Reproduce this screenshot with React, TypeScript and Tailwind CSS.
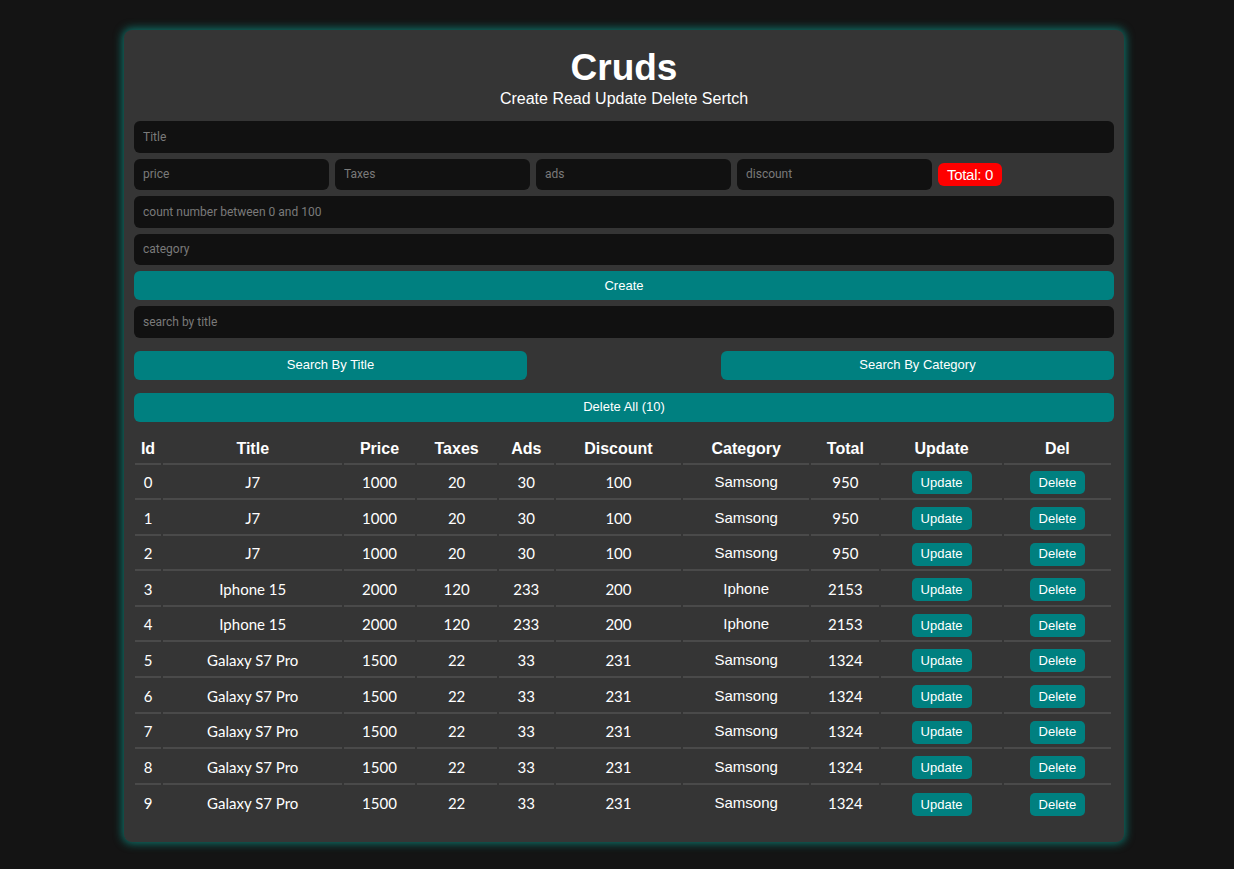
import React from "react";

interface Product {
    id: number;
    title: string;
    price: number;
    taxes: number;
    ads: number;
    discount: number;
    category: string;
    total: number;
}

const products: Product[] = [
    { id: 0, title: "J7", price: 1000, taxes: 20, ads: 30, discount: 100, category: "Samsong", total: 950 },
    { id: 1, title: "J7", price: 1000, taxes: 20, ads: 30, discount: 100, category: "Samsong", total: 950 },
    { id: 2, title: "J7", price: 1000, taxes: 20, ads: 30, discount: 100, category: "Samsong", total: 950 },
    { id: 3, title: "Iphone 15", price: 2000, taxes: 120, ads: 233, discount: 200, category: "Iphone", total: 2153 },
    { id: 4, title: "Iphone 15", price: 2000, taxes: 120, ads: 233, discount: 200, category: "Iphone", total: 2153 },
    { id: 5, title: "Galaxy S7 Pro", price: 1500, taxes: 22, ads: 33, discount: 231, category: "Samsong", total: 1324 },
    { id: 6, title: "Galaxy S7 Pro", price: 1500, taxes: 22, ads: 33, discount: 231, category: "Samsong", total: 1324 },
    { id: 7, title: "Galaxy S7 Pro", price: 1500, taxes: 22, ads: 33, discount: 231, category: "Samsong", total: 1324 },
    { id: 8, title: "Galaxy S7 Pro", price: 1500, taxes: 22, ads: 33, discount: 231, category: "Samsong", total: 1324 },
    { id: 9, title: "Galaxy S7 Pro", price: 1500, taxes: 22, ads: 33, discount: 231, category: "Samsong", total: 1324 },
];

const inputCls =
    "h-[31.5px] w-full rounded-md bg-[#111111] px-[9px] text-[12px] text-white outline-none placeholder:text-[#7a7a7a] font-['Roboto',sans-serif]";

const btnCls =
    "h-[29px] rounded-md bg-[#008080] text-[13px] text-white font-['Liberation_Sans',Arial,sans-serif]";

const heads = [
    { label: "Id", w: "w-[26px]" },
    { label: "Title", w: "w-[179px]" },
    { label: "Price", w: "w-[70px]" },
    { label: "Taxes", w: "w-[80px]" },
    { label: "Ads", w: "w-[55px]" },
    { label: "Discount", w: "w-[125px]" },
    { label: "Category", w: "w-[126px]" },
    { label: "Total", w: "w-[68px]" },
    { label: "Update", w: "w-[120px]" },
    { label: "Del", w: "w-[107px]" },
];

export default function App() {
    return (
        <div className="min-h-[869px] w-full bg-[#141414] pt-[30px] pb-[26px]">
            <div className="ml-[124px] w-[1000px] rounded-lg bg-[#353535] px-[10px] pt-[17px] pb-[20px] shadow-[0_0_9px_2px_#0e6e66]">
                <div className="text-center text-white font-['Liberation_Sans',Arial,sans-serif]">
                    <h1 className="text-[37px] font-bold leading-[42px]">Cruds</h1>
                    <p className="text-[16px] leading-[20px]">Create Read Update Delete Sertch</p>
                </div>

                <div className="mt-[12px] flex flex-col gap-[6px]">
                    <input className={inputCls} placeholder="Title" />
                    <div className="flex items-center gap-[6px]">
                        <input className={inputCls + " !w-[195px]"} placeholder="price" />
                        <input className={inputCls + " !w-[195px]"} placeholder="Taxes" />
                        <input className={inputCls + " !w-[195px]"} placeholder="ads" />
                        <input className={inputCls + " !w-[195px]"} placeholder="discount" />
                        <span className="rounded-md bg-[#ff0000] px-[9px] py-[2px] text-[15px] leading-[19px] tracking-[-0.3px] text-white font-['Liberation_Sans',Arial,sans-serif]">
                            Total: 0
                        </span>
                    </div>
                    <input className={inputCls} placeholder="count number between 0 and 100" />
                    <input className={inputCls} placeholder="category" />
                    <button className={btnCls + " w-full"}>Create</button>
                    <input className={inputCls} placeholder="search by title" />
                </div>

                <div className="mt-[13px] flex justify-between">
                    <button className={btnCls + " w-[393px]"}>Search By Title</button>
                    <button className={btnCls + " w-[393px]"}>Search By Category</button>
                </div>

                <button className={btnCls + " mt-[13px] w-full"}>Delete All (10)</button>

                <table className="mt-[11px] w-[980px] -ml-[1px] border-separate border-spacing-[2px] text-center text-white">
                    <thead>
                        <tr>
                            {heads.map((h) => (
                                <th
                                    key={h.label}
                                    className={h.w + " h-[30px] border-b-2 border-[#4a4a4a] pt-[1px] text-[16px] font-bold font-['Liberation_Sans',Arial,sans-serif]"}
                                >
                                    {h.label}
                                </th>
                            ))}
                        </tr>
                    </thead>
                    <tbody className="text-[15px] font-['Lato',sans-serif]">
                        {products.map((p, i) => {
                            const last = i === products.length - 1;
                            const cell = "h-[33.6px] " + (last ? "" : "border-b-2 border-[#4a4a4a]");
                            return (
                                <tr key={p.id}>
                                    <td className={cell}>{p.id}</td>
                                    <td className={cell}>{p.title}</td>
                                    <td className={cell}>{p.price}</td>
                                    <td className={cell}>{p.taxes}</td>
                                    <td className={cell}>{p.ads}</td>
                                    <td className={cell}>{p.discount}</td>
                                    <td className={cell + " font-['Liberation_Sans',Arial,sans-serif]"}>{p.category}</td>
                                    <td className={cell}>{p.total}</td>
                                    <td className={cell}>
                                        <button className="h-[23px] w-[60px] rounded-[5px] bg-[#008080] text-[13px] text-white font-['Liberation_Sans',Arial,sans-serif]">
                                            Update
                                        </button>
                                    </td>
                                    <td className={cell}>
                                        <button className="h-[23px] w-[55px] rounded-[5px] bg-[#008080] text-[13px] text-white font-['Liberation_Sans',Arial,sans-serif]">
                                            Delete
                                        </button>
                                    </td>
                                </tr>
                            );
                        })}
                    </tbody>
                </table>
            </div>
        </div>
    );
}
